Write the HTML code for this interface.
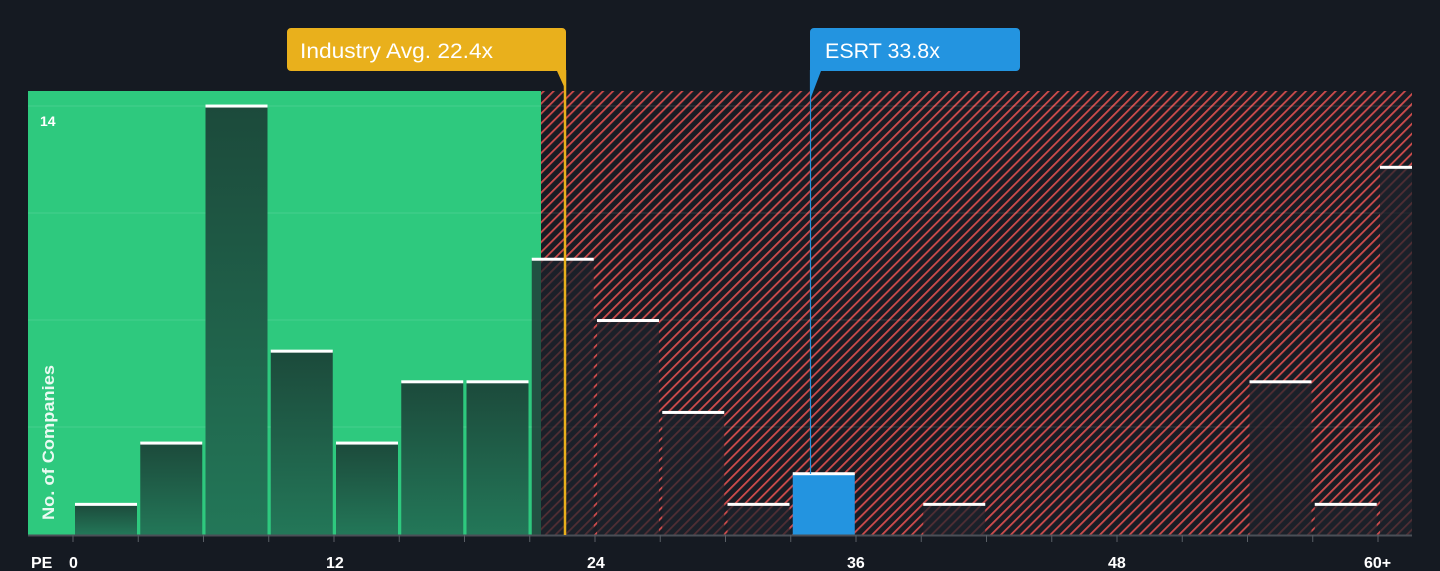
<!DOCTYPE html>
<html><head><style>
html,body{margin:0;padding:0;background:#151a22;width:1440px;height:571px;overflow:hidden;font-family:"Liberation Sans",sans-serif}
</style></head><body>
<svg width="1440" height="571" xmlns="http://www.w3.org/2000/svg" style="display:block">
<defs>
<pattern id="h" width="7" height="7" patternUnits="userSpaceOnUse" patternTransform="rotate(45)">
<rect width="7" height="7" fill="#181c24"/>
<rect x="0" y="0" width="1.8" height="7" fill="#cf4c4c"/>
</pattern>
<linearGradient id="g" x1="0" y1="0" x2="0" y2="1">
<stop offset="0" stop-color="#1c4a3b"/><stop offset="1" stop-color="#237758"/>
</linearGradient>
</defs>
<rect x="28" y="91" width="513" height="444" fill="#2ec97e"/>
<rect x="541" y="91" width="871" height="444" fill="url(#h)"/>
<g stroke="#ffffff" stroke-opacity="0.12" stroke-width="1">
<line x1="28" y1="106" x2="1412" y2="106"/><line x1="28" y1="213" x2="1412" y2="213"/>
<line x1="28" y1="320" x2="1412" y2="320"/><line x1="28" y1="427" x2="1412" y2="427"/>
</g>
<g id="bars"></g>
<line x1="28" y1="535.5" x2="1412" y2="535.5" stroke="#4a4f57" stroke-width="2"/>
<g id="ticks" stroke="#5a5f66" stroke-width="1"></g>
<line x1="565" y1="70" x2="565" y2="535" stroke="#e9b01c" stroke-width="2.5"/>
<path d="M287 32 a4 4 0 0 1 4 -4 H562 a4 4 0 0 1 4 4 V91 L566 91 L557 71 H291 a4 4 0 0 1 -4 -4Z" fill="#e9b01c"/>
<text x="300" y="58" fill="#fff" font-size="21" textLength="193" lengthAdjust="spacingAndGlyphs">Industry Avg. 22.4x</text>
<line x1="810.5" y1="70" x2="810.5" y2="474" stroke="#2394e0" stroke-width="1.2"/>
<path d="M810 32 a4 4 0 0 1 4 -4 H1016 a4 4 0 0 1 4 4 V67 a4 4 0 0 1 -4 4 H821 L810 100Z" fill="#2394e0"/>
<text x="825" y="58" fill="#fff" font-size="21" textLength="115" lengthAdjust="spacingAndGlyphs">ESRT 33.8x</text>
<text x="40" y="126" fill="#fff" font-size="14" font-weight="bold">14</text>
<text transform="translate(54,520) rotate(-90)" fill="#fff" fill-opacity="0.9" font-size="17" font-weight="bold" textLength="155" lengthAdjust="spacingAndGlyphs">No. of Companies</text>
<g fill="#fff" font-size="16" font-weight="bold">
<text x="31" y="568">PE</text>
<text x="69" y="568">0</text>
<text x="326" y="568">12</text>
<text x="587" y="568">24</text>
<text x="847" y="568">36</text>
<text x="1108" y="568">48</text>
<text x="1364" y="568">60+</text>
</g>
</svg>
<script>
var v=[1,3,14,6,3,5,5,9,7,4,1,2,0,1,0,0,0,0,5,1,12];
var ns="http://www.w3.org/2000/svg",g=document.getElementById('bars'),t=document.getElementById('ticks');
function el(n,a,p){var e=document.createElementNS(ns,n);for(var k in a)e.setAttribute(k,a[k]);p.appendChild(e);}
for(var i=0;i<v.length;i++){var x=75+65.25*i,w=62;if(x+w>1412)w=1412-x;
var h=v[i]*30.64,y=535-h;
if(i<=22)el('line',{x1:x-2,y1:535,x2:x-2,y2:542},t);
if(!v[i])continue;
var fill=i<7?'url(#g)':(i==11?'#2394e0':'#1d232b');var op=(i>=7&&i!=11)?0.72:1;
el('rect',{x:x,y:y,width:w,height:h,fill:fill,'fill-opacity':op},g);
el('rect',{x:x,y:y-1.5,width:w,height:3,fill:'#fff'},g);}
</script>
</body></html>
